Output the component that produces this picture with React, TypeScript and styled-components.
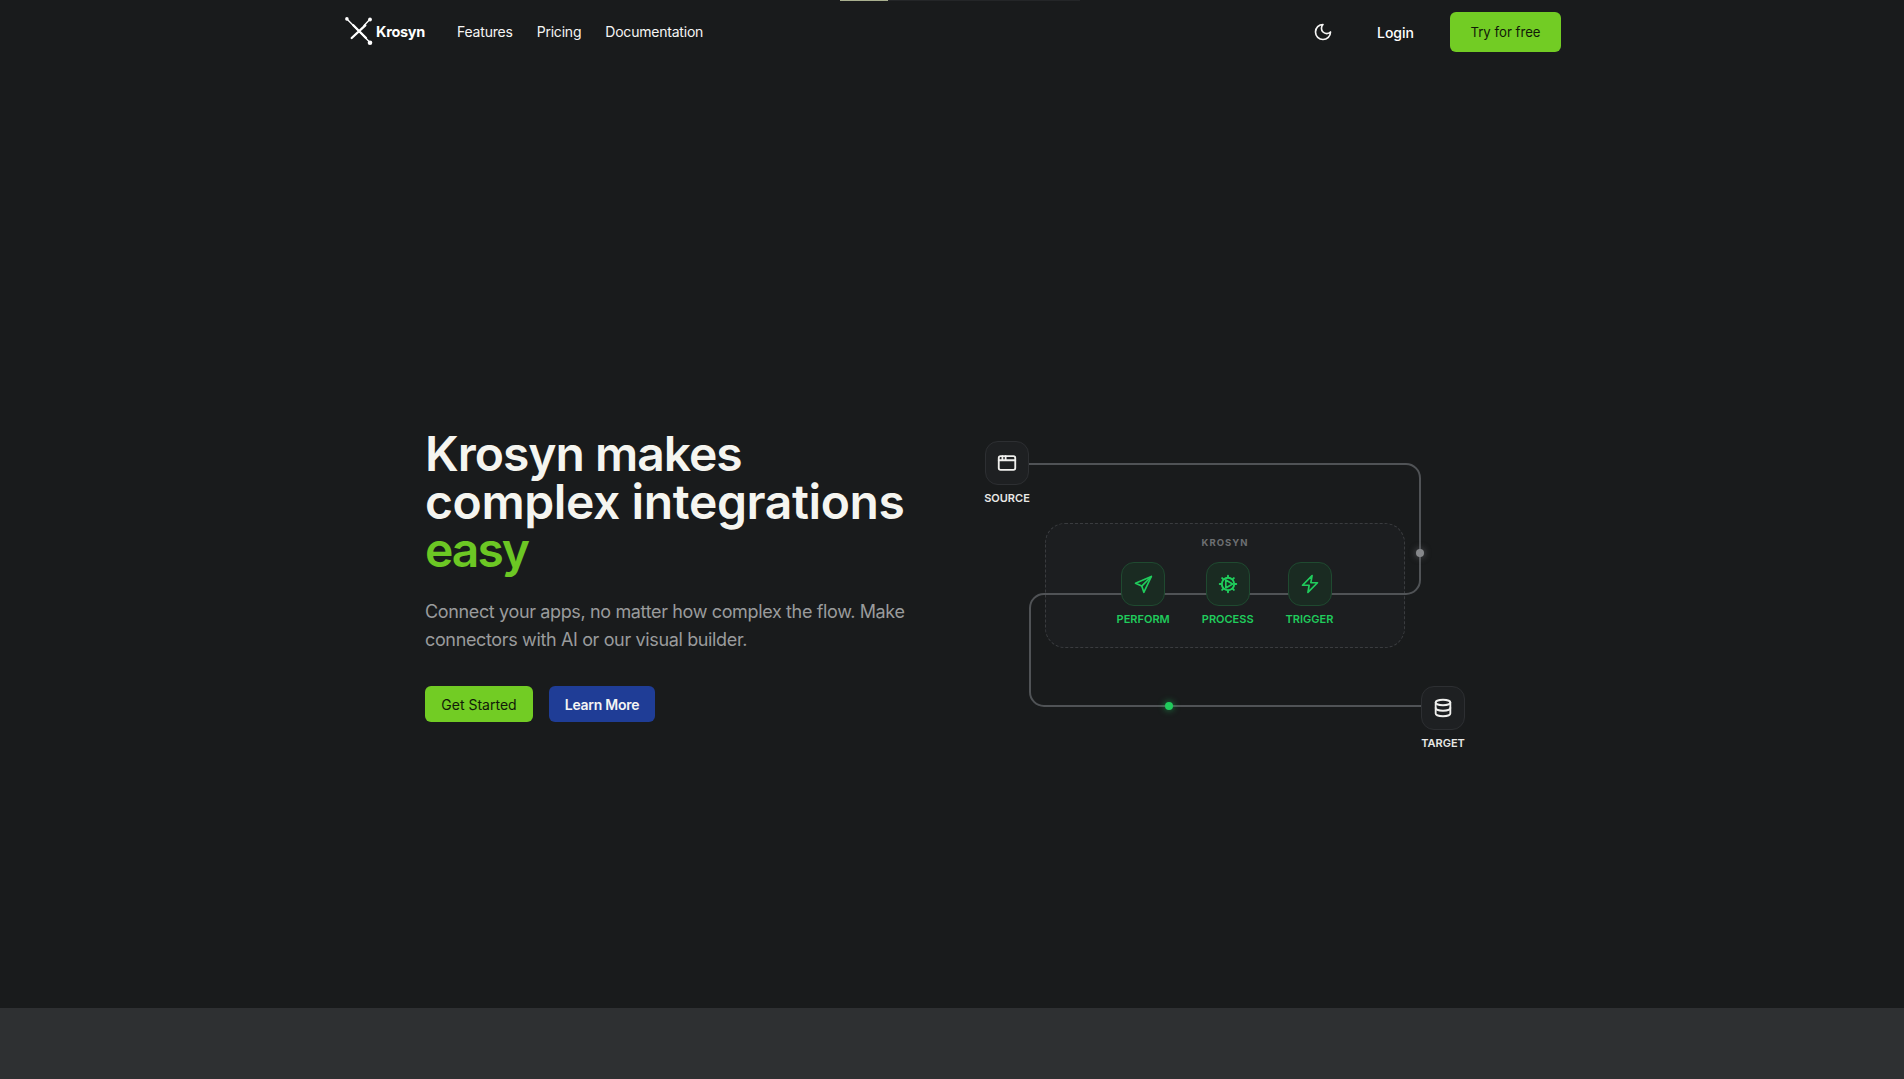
import React from "react";
import styled, { createGlobalStyle } from "styled-components";

const Global = createGlobalStyle`
  html, body { margin: 0; padding: 0; height: 100%; overflow: hidden; background: #191b1c; }
  * { box-sizing: border-box; }
  body { font-family: Inter, "Noto Sans", "Liberation Sans", sans-serif; -webkit-font-smoothing: antialiased; }
`;

const Page = styled.div`
  position: relative;
  height: 1079px;
  display: flex;
  flex-direction: column;
  background: #191b1c;
  color: #f5f5f4;
`;

const TopStrip = styled.div`
  position: absolute;
  top: 0;
  left: 840px;
  display: flex;
  height: 1px;
`;

const StripSegment = styled.span<{ $w: number; $c: string }>`
  display: block;
  width: ${(p) => p.$w}px;
  background: ${(p) => p.$c};
`;

const Header = styled.header`
  flex: none;
  height: 64px;
  padding: 0 343px 0 345px;
  display: flex;
  align-items: center;
`;

const Brand = styled.a`
  display: flex;
  align-items: center;
  gap: 1px;
  margin-bottom: 1px;
  font-size: 14.5px;
  font-weight: 700;
  letter-spacing: -0.02em;
  color: #fff;
`;

const Nav = styled.nav`
  margin: 0 0 2px 32px;
  display: flex;
  gap: 24px;
`;

const NavLink = styled.a`
  font-size: 14px;
  font-weight: 400;
  letter-spacing: -0.015em;
  color: #f5f5f4;
`;

const HeaderActions = styled.div`
  margin-left: auto;
  display: flex;
  align-items: center;
`;

const ThemeToggle = styled.button`
  width: 24px;
  height: 24px;
  padding: 0;
  display: flex;
  align-items: center;
  justify-content: center;
  border: 0;
  background: none;
  color: #f5f5f4;
`;

const Login = styled.a`
  margin: 1px 36px 0 42px;
  font-size: 14px;
  font-weight: 500;
  color: #fff;
`;

const PrimaryButton = styled.button<{ $h: number; $w: number; $fs: number }>`
  width: ${(p) => p.$w}px;
  height: ${(p) => p.$h}px;
  padding: 0;
  border: 0;
  border-radius: 6px;
  background: #72cc24;
  color: #111b08;
  font: 400 ${(p) => p.$fs}px Inter, "Noto Sans", sans-serif;
`;

const SecondaryButton = styled.button`
  width: 106px;
  height: 36px;
  padding: 0;
  border: 0;
  border-radius: 6px;
  background: #1f3d96;
  color: #f5f5f4;
  font: 600 14px Inter, "Noto Sans", sans-serif;
  letter-spacing: -0.02em;
`;

const Hero = styled.main`
  flex: none;
  height: 944px;
  padding: 366px 0 0 425px;
  display: grid;
  grid-template-columns: 480px 480px;
  column-gap: 80px;
  align-items: start;
`;

const HeroCopy = styled.div`
  display: flex;
  flex-direction: column;
  align-items: flex-start;
`;

const Title = styled.h1`
  margin: 0;
  font-size: 48px;
  line-height: 48px;
  font-weight: 600;
  white-space: nowrap;
  color: #f5f5f0;
`;

const TitleLine = styled.span<{ $track: number; $accent?: boolean }>`
  display: block;
  letter-spacing: ${(p) => p.$track}em;
  color: ${(p) => (p.$accent ? "#6cc724" : "inherit")};
`;

const Lead = styled.p`
  margin: 24px 0 0;
  font-size: 18px;
  line-height: 28px;
  font-weight: 400;
  letter-spacing: -0.02em;
  white-space: nowrap;
  color: #9a9b9c;
`;

const HeroButtons = styled.div`
  margin-top: 32px;
  display: flex;
  gap: 16px;
`;

const Canvas = styled.div`
  position: relative;
  width: 480px;
  height: 320px;
  margin-top: 11px;
`;

const Wires = styled.svg`
  position: absolute;
  inset: 0;
  z-index: 1;
`;

const EngineBox = styled.div`
  position: absolute;
  left: 60px;
  top: 82px;
  width: 360px;
  height: 125px;
  padding-top: 11px;
  border: 1px dashed #3a3c3f;
  border-radius: 20px;
  background: #1c1e20;
  display: flex;
  flex-direction: column;
  align-items: center;
  gap: 12px;
`;

const EngineTitle = styled.div`
  font-size: 9.5px;
  line-height: 15px;
  font-weight: 700;
  letter-spacing: 0.105em;
  color: #6d6f72;
`;

const EngineRow = styled.div`
  display: flex;
  gap: 32px;
  position: relative;
  z-index: 2;
`;

const NodeColumn = styled.div<{ $x?: number; $y?: number }>`
  display: flex;
  flex-direction: column;
  align-items: center;
  gap: 5px;
  ${(p) =>
    p.$x !== undefined
      ? `position: absolute; z-index: 2; left: ${p.$x}px; top: ${p.$y}px; width: 44px;`
      : ""}
`;

const NodeTile = styled.div<{ $green?: boolean }>`
  width: 44px;
  height: 44px;
  display: flex;
  align-items: center;
  justify-content: center;
  border-radius: 13px;
  border: 1px solid ${(p) => (p.$green ? "#1f4a30" : "#2d2f32")};
  background: ${(p) => (p.$green ? "#1a2b22" : "#1e2022")};
  color: ${(p) => (p.$green ? "#20cc5c" : "#f0f0ee")};
`;

const NodeLabel = styled.span<{ $green?: boolean }>`
  font-size: 11px;
  line-height: 16.5px;
  font-weight: 600;
  white-space: nowrap;
  color: ${(p) => (p.$green ? "#20cc5c" : "#e8e8e6")};
`;

const Pulse = styled.span<{ $x: number; $y: number; $green?: boolean }>`
  position: absolute;
  z-index: 3;
  left: ${(p) => p.$x - 4}px;
  top: ${(p) => p.$y - 4}px;
  width: 8px;
  height: 8px;
  border-radius: 50%;
  background: ${(p) => (p.$green ? "#20cc5c" : "#86888b")};
  box-shadow: 0 0 7px ${(p) => (p.$green ? "rgba(34,197,94,.7)" : "rgba(160,160,165,.5)")};
`;

const BottomBand = styled.div`
  flex: 1;
  background: #2e3032;
`;

const Icon = styled.svg.attrs({
  viewBox: "0 0 24 24",
  fill: "none",
  stroke: "currentColor",
  strokeLinecap: "round",
  strokeLinejoin: "round",
})<{ $s?: number }>`
  width: ${(p) => p.$s ?? 20}px;
  height: ${(p) => p.$s ?? 20}px;
  display: block;
`;

const LogoMark = () => (
  <svg width="30" height="30" viewBox="0 0 30 30" fill="none">
    <g stroke="#fff" strokeLinecap="round">
      <path d="M1.7 1.7 L25 25.4" strokeWidth="1.4" />
      <path d="M25 2.3 L19 8.6" strokeWidth="1.4" />
      <path d="M8.3 8.3 L21 21 M20.3 8.3 L6.7 21" strokeWidth="2.3" />
    </g>
    <circle cx="1.9" cy="1.9" r="1.8" fill="#fff" />
    <circle cx="25" cy="2.5" r="1.9" fill="#fff" />
    <circle cx="25" cy="25.7" r="2.3" fill="#fff" />
  </svg>
);

const GearPlay = () => (
  <Icon $s={22} strokeWidth={2.1}>
    <circle cx="12" cy="12" r="6.8" />
    <path d="M12 3v2M12 19v2M3 12h2M19 12h2M5.6 5.6 7 7M17 17l1.4 1.4M5.6 18.4 7 17M17 7l1.4-1.4" />
    <path d="M9.6 7.6v8.8L17 12z" strokeWidth={1.8} />
  </Icon>
);

export default function App() {
  return (
    <Page>
      <Global />
      <TopStrip>
        <StripSegment $w={48} $c="#a9b08f" />
        <StripSegment $w={192} $c="#242628" />
      </TopStrip>
      <Header>
        <Brand>
          <LogoMark />
          Krosyn
        </Brand>
        <Nav>
          <NavLink>Features</NavLink>
          <NavLink>Pricing</NavLink>
          <NavLink>Documentation</NavLink>
        </Nav>
        <HeaderActions>
          <ThemeToggle aria-label="Toggle theme">
            <Icon $s={20} strokeWidth={2}>
              <path d="M12 3a6 6 0 0 0 9 9 9 9 0 1 1-9-9Z" />
            </Icon>
          </ThemeToggle>
          <Login>Login</Login>
          <PrimaryButton $w={111} $h={40} $fs={13.2}>Try for free</PrimaryButton>
        </HeaderActions>
      </Header>
      <Hero>
        <HeroCopy>
          <Title>
            <TitleLine $track={-0.021}>Krosyn makes</TitleLine>
            <TitleLine $track={-0.008}>complex integrations</TitleLine>
            <TitleLine $track={-0.042} $accent>easy</TitleLine>
          </Title>
          <Lead>
            Connect your apps, no matter how complex the flow. Make
            <br />
            connectors with AI or our visual builder.
          </Lead>
          <HeroButtons>
            <PrimaryButton $w={108} $h={36} $fs={14}>Get Started</PrimaryButton>
            <SecondaryButton>Learn More</SecondaryButton>
          </HeroButtons>
        </HeroCopy>
        <Canvas>
          <EngineBox>
            <EngineTitle>KROSYN</EngineTitle>
            <EngineRow>
              <NodeColumn>
                <NodeTile $green>
                  <Icon strokeWidth={2}>
                    <path d="M22 3 3 11l7.5 3.5L13 22Z" />
                    <path d="M22 3 10.5 14.5" />
                  </Icon>
                </NodeTile>
                <NodeLabel $green>PERFORM</NodeLabel>
              </NodeColumn>
              <NodeColumn>
                <NodeTile $green>
                  <GearPlay />
                </NodeTile>
                <NodeLabel $green>PROCESS</NodeLabel>
              </NodeColumn>
              <NodeColumn>
                <NodeTile $green>
                  <Icon strokeWidth={2}>
                    <path d="M14.5 2 3 13.5h8L9.5 22 21 10.5h-8z" />
                  </Icon>
                </NodeTile>
                <NodeLabel $green>TRIGGER</NodeLabel>
              </NodeColumn>
            </EngineRow>
          </EngineBox>
          <Wires width="480" height="320" viewBox="0 0 480 320" fill="none">
            <path
              d="M44 23 H421 a14 14 0 0 1 14 14 V139 a14 14 0 0 1 -14 14 H59 a14 14 0 0 0 -14 14 V251 a14 14 0 0 0 14 14 H436"
              stroke="#505356"
              strokeWidth="2"
            />
          </Wires>
          <Pulse $x={435} $y={112} />
          <Pulse $x={184} $y={265} $green />
          <NodeColumn $x={0} $y={0}>
            <NodeTile>
              <Icon $s={22} strokeWidth={2}>
                <rect x="3" y="4.5" width="18" height="15" rx="2" />
                <path d="M3 9h18M7 4.5V9M10.5 4.5V9" />
              </Icon>
            </NodeTile>
            <NodeLabel>SOURCE</NodeLabel>
          </NodeColumn>
          <NodeColumn $x={436} $y={245}>
            <NodeTile>
              <Icon $s={22} strokeWidth={2}>
                <ellipse cx="12" cy="6" rx="8" ry="3" />
                <path d="M4 6v12c0 1.7 3.6 3 8 3s8-1.3 8-3V6" />
                <path d="M4 12c0 1.7 3.6 3 8 3s8-1.3 8-3" />
              </Icon>
            </NodeTile>
            <NodeLabel>TARGET</NodeLabel>
          </NodeColumn>
        </Canvas>
      </Hero>
      <BottomBand />
    </Page>
  );
}
